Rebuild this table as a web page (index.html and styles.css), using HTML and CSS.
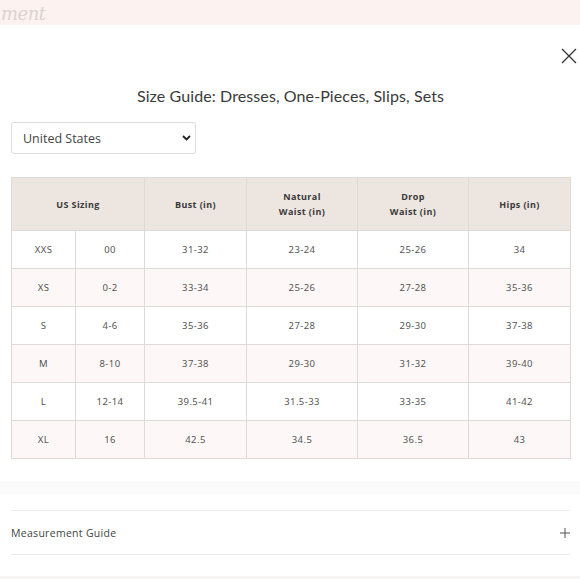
FILE: index.html
```html
<!DOCTYPE html>
<html>
<head>
<meta charset="utf-8">
<link rel="stylesheet" href="styles.css">
</head>
<body>
<div class="topband"><span class="script">ment</span></div>
<div class="modal">
  <div class="close-row">
    <svg class="close" width="16" height="16" viewBox="0 0 16 16"><path d="M1 1L15 15M15 1L1 15" stroke="#333" stroke-width="1.3" fill="none"/></svg>
  </div>
  <h1 class="title">Size Guide: Dresses, One-Pieces, Slips, Sets</h1>
  <div class="select">
    <span>United States</span>
    <svg width="9" height="6" viewBox="0 0 9 6"><path d="M1 1L4.5 4.5L8 1" stroke="#222" stroke-width="1.8" fill="none"/></svg>
  </div>
  <table class="sizes">
    <colgroup>
      <col class="c1"><col class="c2"><col class="c3"><col class="c4"><col class="c5"><col class="c6">
    </colgroup>
    <thead>
      <tr>
        <th colspan="2">US Sizing</th>
        <th>Bust (in)</th>
        <th>Natural<br>Waist (in)</th>
        <th>Drop<br>Waist (in)</th>
        <th>Hips (in)</th>
      </tr>
    </thead>
    <tbody>
      <tr><td>XXS</td><td>00</td><td>31-32</td><td>23-24</td><td>25-26</td><td>34</td></tr>
      <tr class="alt"><td>XS</td><td>0-2</td><td>33-34</td><td>25-26</td><td>27-28</td><td>35-36</td></tr>
      <tr><td>S</td><td>4-6</td><td>35-36</td><td>27-28</td><td>29-30</td><td>37-38</td></tr>
      <tr class="alt"><td>M</td><td>8-10</td><td>37-38</td><td>29-30</td><td>31-32</td><td>39-40</td></tr>
      <tr><td>L</td><td>12-14</td><td>39.5-41</td><td>31.5-33</td><td>33-35</td><td>41-42</td></tr>
      <tr class="alt"><td>XL</td><td>16</td><td>42.5</td><td>34.5</td><td>36.5</td><td>43</td></tr>
    </tbody>
  </table>
</div>
<div class="band"></div>
<div class="accordion">
  <div class="acc-row">
    <span class="acc-label">Measurement Guide</span>
    <svg width="10" height="10" viewBox="0 0 10 10"><path d="M5 0V10M0 5H10" stroke="#555" stroke-width="1" fill="none"/></svg>
  </div>
</div>
<div class="footer"></div>
</body>
</html>
```
FILE: styles.css
```css
html, body {
  margin: 0;
  padding: 0;
  background: #fff;
  width: 580px;
  height: 580px;
  overflow: hidden;
}
body {
  font-family: "Open Sans", "Liberation Sans", sans-serif;
  color: #444;
}
.topband {
  height: 25px;
  background: #fcf2f0;
  overflow: hidden;
  display: flex;
  align-items: flex-end;
}
.script {
  font-family: "DejaVu Serif", serif;
  font-style: italic;
  font-size: 18px;
  line-height: 22px;
  color: #ddd2ce;
  margin-left: 1px;
  letter-spacing: -0.5px;
}
.modal {
  padding: 0 10px 0 11px;
}
.close-row {
  display: flex;
  justify-content: flex-end;
  margin-top: 23px;
  margin-right: -7px;
  height: 16px;
}
.close {
  display: block;
}
.title {
  margin: 22px 0 0;
  font-family: Lato, "Open Sans", sans-serif;
  font-weight: 400;
  font-size: 16px;
  line-height: 20px;
  text-align: center;
  color: #3a3a3a;
  letter-spacing: 0.1px;
}
.select {
  margin-top: 16px;
  width: 185px;
  height: 32px;
  box-sizing: border-box;
  border: 1px solid #dcdcdc;
  border-radius: 3px;
  display: flex;
  align-items: center;
  justify-content: space-between;
  padding: 0 4px 0 11px;
  font-size: 12.5px;
  color: #444;
}
.sizes {
  margin-top: 23px;
  width: 559px;
  border-collapse: collapse;
  table-layout: fixed;
  font-size: 9px;
}
.c1 { width: 64px; }
.c2 { width: 69px; }
.c3 { width: 102px; }
.c4 { width: 111px; }
.c5 { width: 111px; }
.c6 { width: 102px; }
.sizes th, .sizes td {
  border: 1px solid #dedad8;
  text-align: center;
  padding: 0;
}
.sizes th {
  background: #ece5e0;
  height: 52px;
  font-weight: 700;
  color: #3a3a3a;
  line-height: 15px;
  letter-spacing: 0.4px;
}
.sizes td {
  height: 37px;
  color: #555;
  font-family: "Noto Sans", "Open Sans", sans-serif;
  font-size: 9.5px;
  letter-spacing: 0.4px;
}
.sizes tr.alt td {
  background: #fdf8f7;
}
.band {
  margin-top: 22px;
  height: 13px;
  background: #fafafa;
}
.accordion {
  padding: 0 10px 0 11px;
  margin-top: 16px;
}
.acc-row {
  height: 43px;
  border-top: 1px solid #ececec;
  border-bottom: 1px solid #ececec;
  display: flex;
  align-items: center;
  justify-content: space-between;
}
.acc-label {
  font-size: 10.5px;
  color: #444;
  letter-spacing: 0.3px;
}
.footer {
  margin-top: 21px;
  height: 3px;
  background: #f8f4f2;
}
```
